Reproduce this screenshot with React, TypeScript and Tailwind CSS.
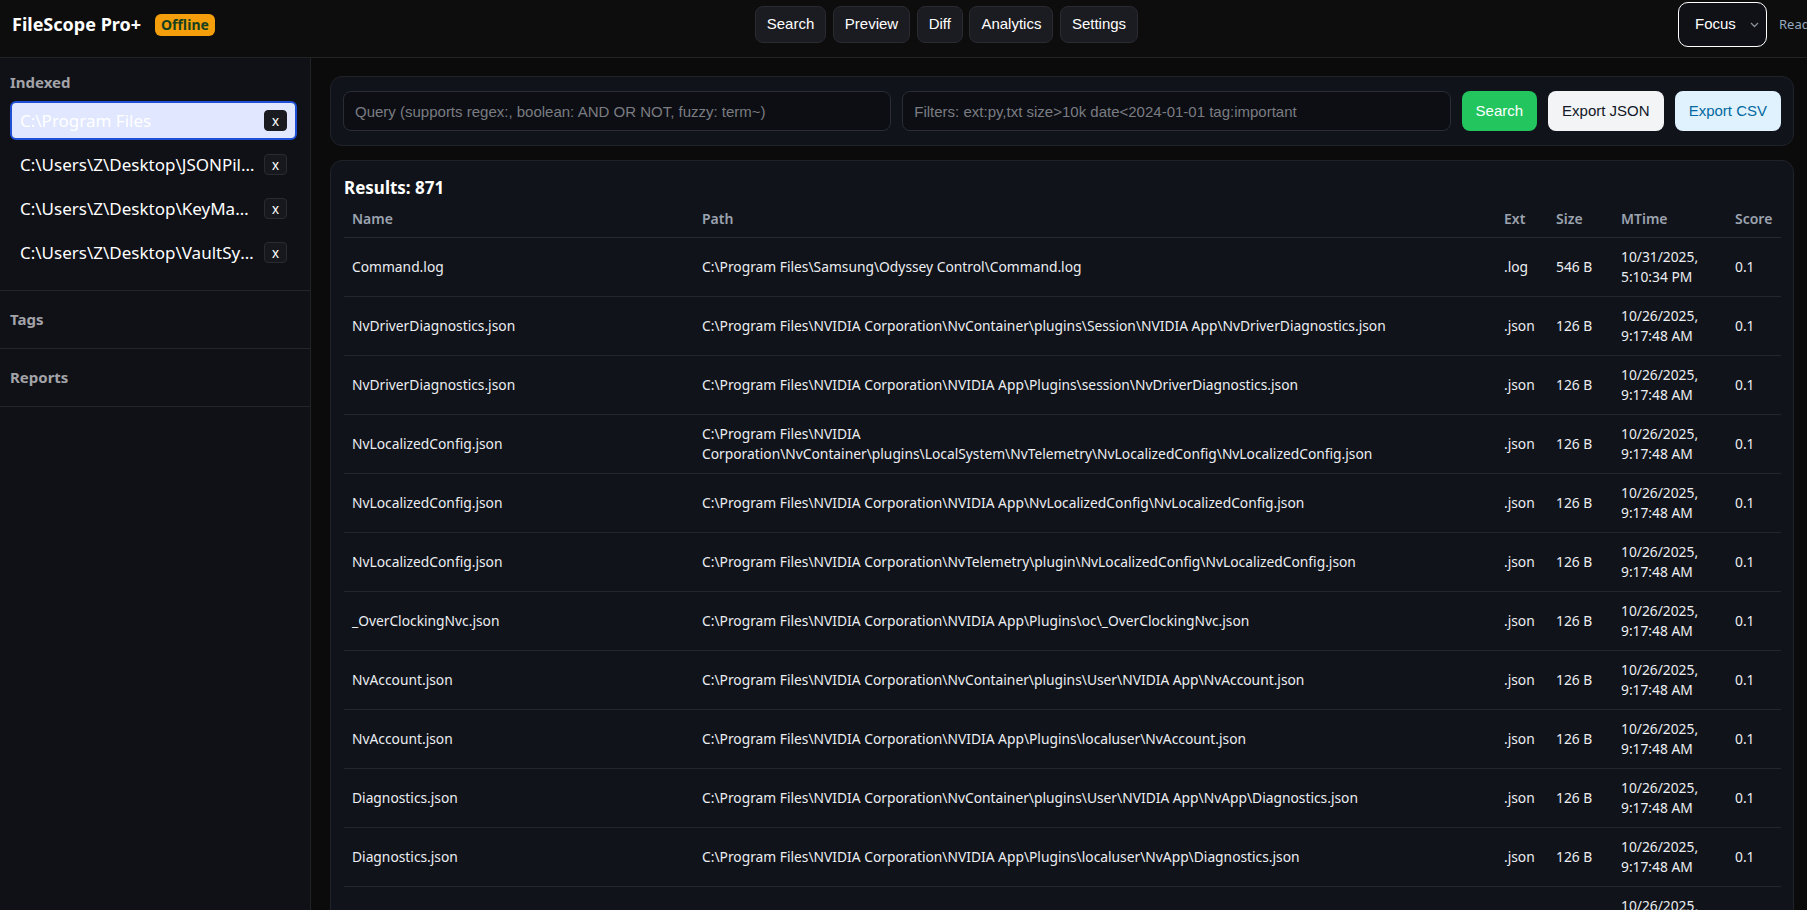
import React from 'react'

const indexed = [
  'C:\\Program Files',
  'C:\\Users\\Z\\Desktop\\JSONPilot',
  'C:\\Users\\Z\\Desktop\\KeyMapper',
  'C:\\Users\\Z\\Desktop\\VaultSync',
]

const navItems = ['Search', 'Preview', 'Diff', 'Analytics', 'Settings']

type Row = { name: string; path: string; ext: string; size: string; mtime: string; score: string }

const nv = 'C:\\Program Files\\NVIDIA Corporation\\'
const older = '10/26/2025, 9:17:48 AM'

const rows: Row[] = [
  { name: 'Command.log', path: 'C:\\Program Files\\Samsung\\Odyssey Control\\Command.log', ext: '.log', size: '546 B', mtime: '10/31/2025, 5:10:34 PM', score: '0.1' },
  { name: 'NvDriverDiagnostics.json', path: nv + 'NvContainer\\plugins\\Session\\NVIDIA App\\NvDriverDiagnostics.json', ext: '.json', size: '126 B', mtime: older, score: '0.1' },
  { name: 'NvDriverDiagnostics.json', path: nv + 'NVIDIA App\\Plugins\\session\\NvDriverDiagnostics.json', ext: '.json', size: '126 B', mtime: older, score: '0.1' },
  { name: 'NvLocalizedConfig.json', path: nv + 'NvContainer\\plugins\\LocalSystem\\NvTelemetry\\NvLocalizedConfig\\NvLocalizedConfig.json', ext: '.json', size: '126 B', mtime: older, score: '0.1' },
  { name: 'NvLocalizedConfig.json', path: nv + 'NVIDIA App\\NvLocalizedConfig\\NvLocalizedConfig.json', ext: '.json', size: '126 B', mtime: older, score: '0.1' },
  { name: 'NvLocalizedConfig.json', path: nv + 'NvTelemetry\\plugin\\NvLocalizedConfig\\NvLocalizedConfig.json', ext: '.json', size: '126 B', mtime: older, score: '0.1' },
  { name: '_OverClockingNvc.json', path: nv + 'NVIDIA App\\Plugins\\oc\\_OverClockingNvc.json', ext: '.json', size: '126 B', mtime: older, score: '0.1' },
  { name: 'NvAccount.json', path: nv + 'NvContainer\\plugins\\User\\NVIDIA App\\NvAccount.json', ext: '.json', size: '126 B', mtime: older, score: '0.1' },
  { name: 'NvAccount.json', path: nv + 'NVIDIA App\\Plugins\\localuser\\NvAccount.json', ext: '.json', size: '126 B', mtime: older, score: '0.1' },
  { name: 'Diagnostics.json', path: nv + 'NvContainer\\plugins\\User\\NVIDIA App\\NvApp\\Diagnostics.json', ext: '.json', size: '126 B', mtime: older, score: '0.1' },
  { name: 'Diagnostics.json', path: nv + 'NVIDIA App\\Plugins\\localuser\\NvApp\\Diagnostics.json', ext: '.json', size: '126 B', mtime: older, score: '0.1' },
  { name: 'NvTelemetryConfig.json', path: nv + 'NvTelemetry\\plugin\\NvTelemetryConfig.json', ext: '.json', size: '126 B', mtime: older, score: '0.1' },
]

function Header() {
  return (
    <header className="flex h-[58px] shrink-0 items-center border-b border-[#222326] bg-[#0d0d0d] pb-[8px] pl-[12px]">
      {/* Brand */}
      <div className="flex shrink-0 items-center gap-[14px]">
        <span className="font-['Noto_Sans'] text-[18px] font-bold text-white">FileScope Pro+</span>
        <span className="rounded-[6px] bg-[#f59e0b] px-[6px] font-['Noto_Sans'] text-[14px] font-bold leading-[22px] text-[#14401f]">
          Offline
        </span>
      </div>

      <div className="flex-1" />

      {/* Nav */}
      <nav className="flex shrink-0 items-center gap-[6.5px] font-['Liberation_Sans'] text-[15px]">
        {navItems.map(item => (
          <button
            key={item}
            className="h-[37px] rounded-[8px] border border-[#2a2b31] bg-[#1b1c21] px-[11px] text-white"
          >
            {item}
          </button>
        ))}
      </nav>

      <div className="flex-1" />

      {/* Mode + status */}
      <div className="flex w-[129px] shrink-0 items-center gap-[12px] whitespace-nowrap">
        <div className="flex h-[45px] w-[89px] shrink-0 items-center justify-between rounded-[10px] border border-white bg-[#0f1117] pl-[16px] pr-[7px] font-['Liberation_Sans'] text-[15px] text-white">
          Focus
          <svg width="9" height="6" viewBox="0 0 9 6" fill="none">
            <polyline points="1,1 4.5,4.5 8,1" stroke="#8b8f98" strokeWidth="1.3" />
          </svg>
        </div>
        <span className="font-['Noto_Sans'] text-[13px] text-[#94a7bf]">Ready</span>
      </div>
    </header>
  )
}

function Sidebar() {
  return (
    <aside className="w-[311px] shrink-0 border-r border-[#222326] bg-[#0f1117] font-['Noto_Sans']">
      <section className="border-b border-[#23252b] pb-[18px] pl-[10px] pr-[13px] pt-[14px]">
        <p className="mb-[8px] text-[15px] font-bold leading-[21px] text-[#a3a3a8]">Indexed</p>
        <div className="flex flex-col gap-[5px]">
          {indexed.map((dir, i) => {
            const active = i === 0
            return (
              <div
                key={dir}
                className={`flex h-[39px] items-center gap-[7px] rounded-[6px] pl-[8px] pr-[8px] ${
                  active ? 'border-2 border-[#1f4fd6] bg-[#e0e7ff]' : 'border-2 border-transparent'
                }`}
              >
                <span className="min-w-0 flex-1 truncate text-[17px] text-white">{dir}</span>
                <button
                  className={`flex h-[21px] w-[23px] shrink-0 items-center justify-center rounded-[4px] border font-['Liberation_Sans'] text-[14px] leading-none text-white ${
                    active ? 'border-[#1a1b20] bg-[#1a1b20]' : 'border-[#2a2b31] bg-[#17181d]'
                  }`}
                >
                  x
                </button>
              </div>
            )
          })}
        </div>
      </section>
      {['Tags', 'Reports'].map(label => (
        <section key={label} className="border-b border-[#23252b] px-[10px] py-[18px]">
          <p className="text-[15px] font-bold leading-[21px] text-[#a3a3a8]">{label}</p>
        </section>
      ))}
    </aside>
  )
}

function SearchBar() {
  return (
    <div className="flex items-center gap-[11px] rounded-[12px] border border-[#1f2229] bg-[#10131a] px-[12px] py-[14px] font-['Liberation_Sans'] text-[15px]">
      <input
        className="h-[40px] min-w-0 flex-1 rounded-[8px] border border-[#2a2d35] bg-[#0c0e13] px-[11px] text-white outline-none placeholder:text-[#7a7c82]"
        placeholder="Query (supports regex:, boolean: AND OR NOT, fuzzy: term~)"
      />
      <input
        className="h-[40px] min-w-0 flex-1 rounded-[8px] border border-[#2a2d35] bg-[#0c0e13] px-[11px] text-white outline-none placeholder:text-[#7a7c82]"
        placeholder="Filters: ext:py,txt size>10k date<2024-01-01 tag:important"
      />
      <button className="h-[40px] rounded-[8px] bg-[#22c55e] px-[14px] text-white">Search</button>
      <button className="h-[40px] rounded-[8px] bg-[#f3f4f6] px-[14px] text-[#111827]">Export JSON</button>
      <button className="h-[40px] rounded-[8px] bg-[#e0f2fe] px-[14px] text-[#0369a1]">Export CSV</button>
    </div>
  )
}

function Results() {
  const cols = ['Name', 'Path', 'Ext', 'Size', 'MTime', 'Score']
  return (
    <div className="rounded-[12px] border border-[#1f2229] bg-[#10131a] px-[13px] pt-[15px] font-['Noto_Sans']">
      <p className="text-[17px] font-bold leading-[24px] text-white">Results: 871</p>
      <table className="w-full table-fixed border-collapse text-[13.8px] leading-[20px]">
        <colgroup>
          <col className="w-[350px]" />
          <col className="w-[802px]" />
          <col className="w-[52px]" />
          <col className="w-[65px]" />
          <col className="w-[114px]" />
          <col className="w-[54px]" />
        </colgroup>
        <thead>
          <tr className="border-b border-[#262930]">
            {cols.map(c => (
              <th key={c} className="px-2 pb-[8px] pt-[9px] text-left text-[14px] font-semibold text-[#9ca3af]">
                {c}
              </th>
            ))}
          </tr>
        </thead>
        <tbody className="text-[#eceef2]">
          {rows.map((r, i) => (
            <tr key={i} className="border-b border-[#23262d]">
              <td className="px-2 py-[9px] align-middle">{r.name}</td>
              <td className="px-2 py-[9px] align-middle">{r.path}</td>
              <td className="px-2 py-[9px] align-middle">{r.ext}</td>
              <td className="px-2 py-[9px] align-middle">{r.size}</td>
              <td className="px-2 py-[9px] align-middle">{r.mtime}</td>
              <td className="px-2 py-[9px] align-middle">{r.score}</td>
            </tr>
          ))}
        </tbody>
      </table>
    </div>
  )
}

export default function App() {
  return (
    <div className="flex h-screen w-screen flex-col overflow-hidden bg-[#0b0b0b]">
      <Header />
      <div className="flex min-h-0 flex-1">
        <Sidebar />
        <main className="flex min-w-0 flex-1 flex-col gap-[14px] overflow-hidden pl-[19px] pr-[13px] pt-[18px]">
          <SearchBar />
          <Results />
        </main>
      </div>
    </div>
  )
}
